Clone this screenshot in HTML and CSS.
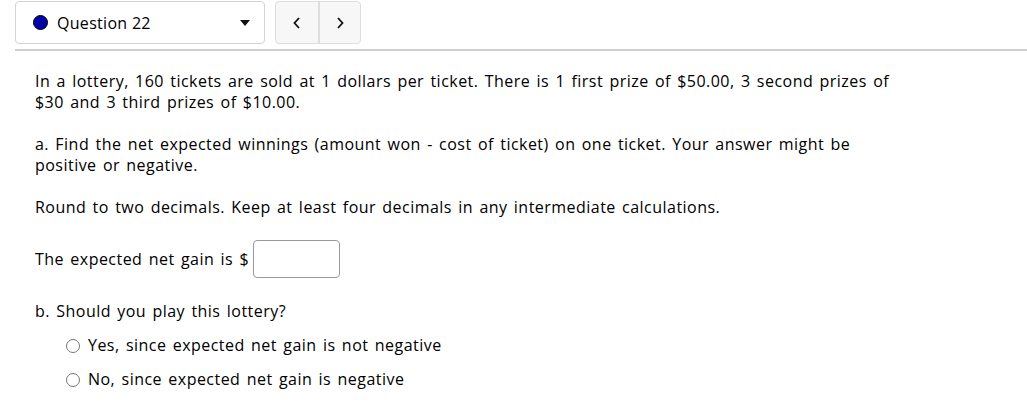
FILE: index.html
```html
<!DOCTYPE html>
<html>
<head>
<meta charset="utf-8">
<link rel="stylesheet" href="styles.css">
</head>
<body>
<div class="header">
  <div class="qselect">
    <span class="dot"></span>
    <span class="qname">Question 22</span>
    <span class="caret"></span>
  </div>
  <div class="nav">
    <button class="navbtn"><svg width="8" height="12" viewBox="0 0 8 12"><path d="M6 1 L1.5 6 L6 11" fill="none" stroke="#111" stroke-width="1.8"/></svg></button>
    <button class="navbtn"><svg width="8" height="12" viewBox="0 0 8 12"><path d="M2 1 L6.5 6 L2 11" fill="none" stroke="#111" stroke-width="1.8"/></svg></button>
  </div>
</div>
<div class="rule"></div>
<div class="question">
  <p class="p1">In a lottery, 160 tickets are sold at 1 dollars per ticket. There is 1 first prize of $50.00, 3 second prizes of $30 and 3 third prizes of $10.00.</p>
  <p class="p2">a. Find the net expected winnings (amount won - cost of ticket) on one ticket. Your answer might be positive or negative.</p>
  <p class="p3">Round to two decimals. Keep at least four decimals in any intermediate calculations.</p>
  <p class="p4">The expected net gain is $ <input class="ans" type="text"></p>
  <p class="p5">b. Should you play this lottery?</p>
  <ul class="choices">
    <li><span class="radio"></span>Yes, since expected net gain is not negative</li>
    <li><span class="radio"></span>No, since expected net gain is negative</li>
  </ul>
</div>
</body>
</html>
```
FILE: styles.css
```css
html, body { margin: 0; padding: 0; background: #fff; }
body { font-family: "Open Sans", "Liberation Sans", sans-serif; color: #000; }
.header { display: flex; align-items: flex-start; padding: 1px 0 0 15px; gap: 10px; height: 44px; }
.qselect { width: 248px; height: 41px; border: 1px solid #d4d4d4; border-radius: 4px; display: flex; align-items: center; box-sizing: content-box; }
.dot { width: 13px; height: 13px; border-radius: 50%; background: #0000a8; border: 1px solid #000; margin-left: 17px; }
.qname { font-family: "Open Sans", sans-serif; font-size: 16px; letter-spacing: 0.3px; margin-left: 9px; flex: 1; }
.caret { width: 0; height: 0; border-left: 5px solid transparent; border-right: 5px solid transparent; border-top: 6px solid #111; margin-right: 14px; }
.nav { display: flex; height: 41px; border: 1px solid #ddd; border-radius: 4px; background: #f7f7f7; overflow: hidden; }
.navbtn { width: 42px; height: 41px; border: 0; background: transparent; padding: 0; display: flex; align-items: center; justify-content: center; }
.navbtn + .navbtn { border-left: 2px solid #ddd; }
.rule { height: 0; border-top: 2px solid #cfcfcf; margin: 4px 0 0 15px; }
.question { padding-left: 35px; width: 870px; font-size: 16px; line-height: 21px; letter-spacing: 0.47px; word-spacing: 1.7px; }
.question p { margin: 0; }
.p1 { margin-top: 20px !important; }
.p2 { margin-top: 21px !important; }
.p3 { margin-top: 21px !important; }
.p4 { margin-top: 22px !important; display: flex; align-items: center; gap: 4px; }
.ans { width: 85px; height: 36px; border: 1px solid #999; border-radius: 4px; padding: 0; margin: 0; }
.p5 { margin-top: 23px !important; }
.choices { list-style: none; margin: 13px 0 0 0; padding: 0 0 0 31px; }
.choices li { display: flex; align-items: center; height: 21px; margin-bottom: 13px; }
.radio { width: 12px; height: 12px; border: 1px solid #777; border-radius: 50%; margin-right: 8px; }
```
